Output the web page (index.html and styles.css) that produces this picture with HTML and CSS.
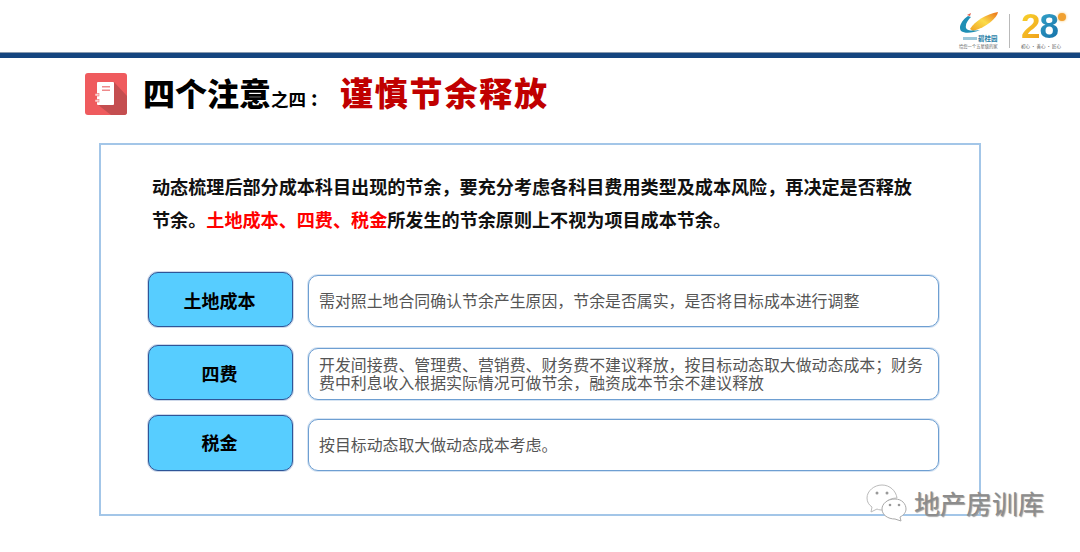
FILE: index.html
```html
<!DOCTYPE html>
<html lang="zh-CN">
<head>
<meta charset="utf-8">
<title>四个注意之四</title>
<link rel="stylesheet" href="styles.css">
</head>
<body>
<div class="slide">
  <header class="top">
    <div class="logos">
      <div class="brand">
        <svg class="swoosh" width="40" height="22" viewBox="0 0 40 22">
          <defs>
            <linearGradient id="sw" x1="0" y1="1" x2="1" y2="0">
              <stop offset="0" stop-color="#f0a020"/>
              <stop offset=".5" stop-color="#fbdc4a"/>
              <stop offset="1" stop-color="#ea6f18"/>
            </linearGradient>
          </defs>
          <path d="M11 17C16 9 27 2 39 0C38 6 28 15 14 19Z" fill="url(#sw)"/>
          <path d="M9 4C3 8 -1 15 2 19C6 22 14 21 21 18C14 19 8 19 7 16C6 12 9 8 12 5Z" fill="#1f8fb5"/>
          <path d="M8 3L12 1L11 4Z" fill="#e0604a"/>
        </svg>
        <div class="brand-name"><span class="brand-mark"></span>碧桂园</div>
        <div class="brand-sub">给您一个五星级的家</div>
      </div>
      <div class="divider"></div>
      <div class="anniv">
        <div class="num-row"><span class="n2">2</span><span class="n8">8</span><span class="sun"></span></div>
        <div class="anniv-sub">初心 · 善心 · 匠心</div>
      </div>
    </div>
  </header>
  <div class="bar"></div>
  <div class="title-row">
    <svg class="title-icon" width="42" height="42" viewBox="0 0 42 42">
      <rect width="42" height="42" rx="3" fill="#ef5b5e"/>
      <path d="M29 9L42 23V39Q42 42 39 42H26L12 31Z" fill="#c44e50"/>
      <rect x="12" y="9" width="17" height="23" rx="1" fill="#fff"/>
      <rect x="17" y="13" width="8" height="1.5" fill="#ee8a8b"/>
      <rect x="17" y="16.5" width="8" height="1.5" fill="#ee8a8b"/>
      <rect x="10" y="20.5" width="4" height="2.5" fill="#fbd4d4" stroke="#ef5b5e" stroke-width=".5"/>
      <rect x="10" y="26.5" width="4" height="2.5" fill="#fbd4d4" stroke="#ef5b5e" stroke-width=".5"/>
    </svg>
    <h1 class="title"><span>四个注意</span><small>之四</small><span class="colon">:</span><em>谨慎节余释放</em></h1>
  </div>
  <section class="panel">
    <p class="lead">动态梳理后部分成本科目出现的节余，要充分考虑各科目费用类型及成本风险，再决定是否释放节余。<b>土地成本、四费、税金</b>所发生的节余原则上不视为项目成本节余。</p>
    <div class="rows">
      <div class="row">
        <div class="tag">土地成本</div>
        <div class="desc">需对照土地合同确认节余产生原因，节余是否属实，是否将目标成本进行调整</div>
      </div>
      <div class="row">
        <div class="tag">四费</div>
        <div class="desc">开发间接费、管理费、营销费、财务费不建议释放，按目标动态取大做动态成本；财务费中利息收入根据实际情况可做节余，融资成本节余不建议释放</div>
      </div>
      <div class="row row-last">
        <div class="tag tag-raised">税金</div>
        <div class="desc">按目标动态取大做动态成本考虑。</div>
      </div>
    </div>
  </section>
  <div class="watermark">
    <svg width="42" height="38" viewBox="0 0 42 38">
      <path d="M16 1C8 1 1 7 1 14C1 18 3 21 6 23L5 28L11 25C13 26 15 26 17 26C16 20 22 14 31 14C30 7 24 1 16 1Z" fill="#fff" stroke="#bbb" stroke-width="1"/>
      <path d="M29 15C21 15 16 20 16 25C16 31 22 35 29 35L35 37L34 33C38 31 40 28 40 25C40 20 36 15 29 15Z" fill="#fff" stroke="#aaa" stroke-width="1"/>
      <circle cx="11" cy="9" r="1.5" fill="#999"/><circle cx="21" cy="9" r="1.5" fill="#999"/>
      <circle cx="24" cy="21" r="1.3" fill="#999"/><circle cx="33" cy="21" r="1.3" fill="#999"/>
    </svg>
    <span>地产房训库</span>
  </div>
</div>
</body>
</html>
```
FILE: styles.css
```css
* { box-sizing: border-box; }
html, body { margin: 0; padding: 0; background: #fff; }
body { font-family: "Noto Sans CJK SC", "Noto Sans", sans-serif; }
.slide { position: relative; width: 1080px; height: 552px; overflow: hidden; background: #fff; }

.top { height: 52px; display: flex; justify-content: flex-end; padding: 12px 13px 0 0; }
.logos { display: flex; align-items: flex-start; }
.brand { width: 50px; display: flex; flex-direction: column; align-items: flex-start; }
.swoosh { display: block; }
.brand-name { font-size: 6.5px; line-height: 8px; color: #2a7fa8; font-weight: 700; display: flex; align-items: center; margin-left: 4px; white-space: nowrap; }
.brand-mark { width: 14px; height: 3px; margin-right: 1px; background: #9cc8da; }
.brand-sub { font-size: 4.3px; line-height: 6px; color: #666; white-space: nowrap; margin-top: 1px; }
.divider { width: 1px; height: 34px; background: #b9b9b9; margin: 2px 11px 0 0; }
.anniv { width: 46px; }
.num-row { position: relative; height: 28px; display: flex; font-family: "Liberation Sans", sans-serif; font-weight: 700; font-size: 35px; line-height: 28px; letter-spacing: -1px; }
.n2 { background: linear-gradient(135deg, #f8d52e, #f0a01a); -webkit-background-clip: text; background-clip: text; color: transparent; }
.n8 { background: linear-gradient(135deg, #35a4c9, #1570a8); -webkit-background-clip: text; background-clip: text; color: transparent; }
.sun { position: absolute; left: 37px; top: 1px; width: 8px; height: 8px; border-radius: 50%; background: #f0a030; box-shadow: 0 0 3px #f7c46c; }
.anniv-sub { font-size: 4.5px; line-height: 8px; color: #555; margin-top: 2px; white-space: nowrap; }

.bar { height: 6px; background: #15457f; border-top: 1px solid #8a9bb0; }

.title-row { display: flex; align-items: center; height: 42px; margin: 15px 0 0 85px; }
.title-icon { flex: none; }
.title { margin: 2px 0 0 16px; font-size: 32px; line-height: 42px; font-weight: 900; color: #000; display: flex; align-items: baseline; white-space: nowrap; }
.title small { font-size: 17.5px; font-weight: 700; }
.title .colon { font-size: 20px; width: 34px; padding-left: 5px; font-weight: 700; }
.title em { font-style: normal; color: #c00000; letter-spacing: 1.8px; font-size: 33px; }

.panel { width: 882px; height: 373px; margin: 28px 0 0 99px; border: 2px solid #a3c6e8; padding: 25px 39px 0 47px; }
.lead { margin: 0 0 0 4px; width: 765px; font-size: 18.1px; line-height: 33px; font-weight: 700; color: #111; }
.lead b { color: #f00; font-weight: 700; }

.rows { display: flex; flex-direction: column; gap: 18px; margin-top: 36px; }
.row { display: flex; align-items: flex-end; gap: 15px; height: 55px; }
.row-last { margin-top: -3px; height: 56px; }
.tag { width: 145px; height: 100%; flex: none; border: 1px solid #2f5597; box-shadow: 0 0 0 1px rgba(90, 125, 185, .3); border-radius: 10px; background: #57cdff; display: flex; align-items: center; justify-content: center; padding-right: 2px; font-size: 18px; font-weight: 700; color: #000; }
.tag-raised { padding-bottom: 3px; }
.desc { width: 631px; height: 52px; border: 1px solid #6e9fd2; box-shadow: 0 0 0 1px rgba(120, 165, 215, .3); border-radius: 10px; padding: 0 14px 0 10px; display: flex; align-items: center; font-size: 15.9px; line-height: 18px; color: #555; background: #fff; }

.watermark { position: absolute; left: 866px; top: 484px; display: flex; align-items: center; gap: 6px; }
.watermark span { font-size: 26px; line-height: 38px; color: #8c8c8c; text-shadow: 1px 1px 1px #999; white-space: nowrap; }
```
